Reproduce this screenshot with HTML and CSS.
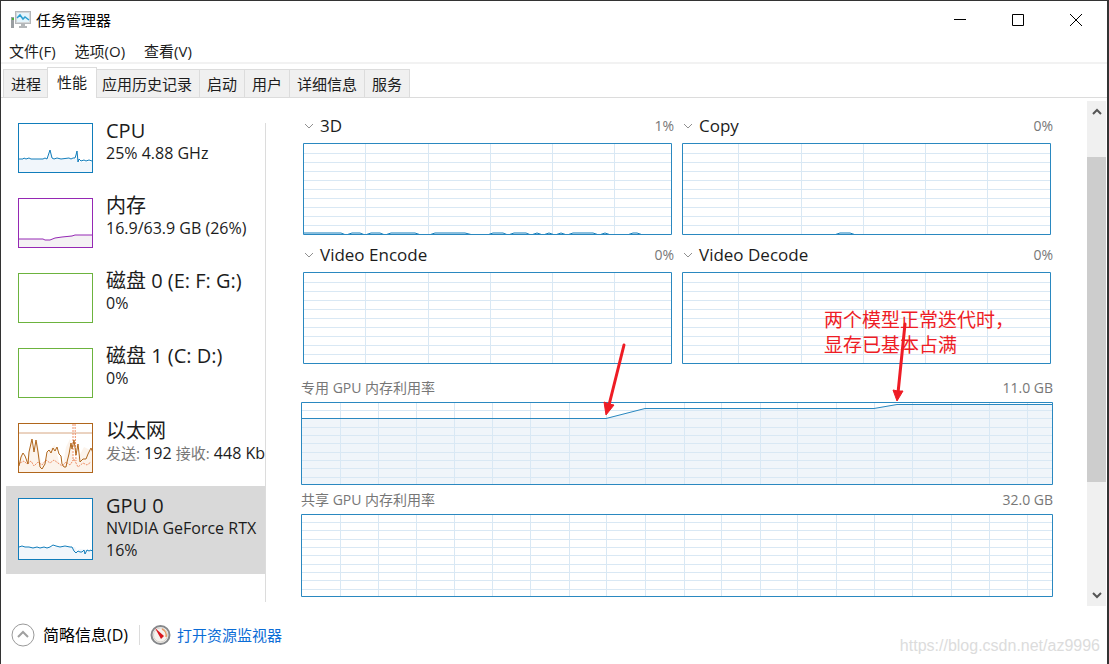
FILE: index.html
```html
<!DOCTYPE html>
<html lang="zh-CN">
<head>
<meta charset="utf-8">
<title>任务管理器</title>
<link rel="stylesheet" href="styles.css">
</head>
<body>
<div class="window">
  <header class="titlebar">
    <svg class="app-icon" width="20" height="18" viewBox="0 0 20 18">
      <rect x="0" y="6" width="3" height="11" fill="#9a9fa2"/>
      <rect x="1" y="7" width="2" height="2" fill="#4caf3a"/>
      <rect x="4.500" y="0.500" width="15" height="12" fill="#d4d7d9" stroke="#b4b8bb"/>
      <rect x="6" y="2" width="12" height="9" fill="#e4f5fc"/>
      <path d="M6 7L9 4l3 4 2-2 4 3" fill="none" stroke="#2d9fd0" stroke-width="1.500"/>
      <path d="M10 13h4v2h2v2H8v-2h2z" fill="#b4b7b9"/>
    </svg>
    <h1 class="app-title">任务管理器</h1>
    <div class="window-buttons">
      <button class="window-button" aria-label="最小化"><svg width="12" height="12" viewBox="0 0 12 12"><path d="M0 5.500h12"/></svg></button>
      <button class="window-button" aria-label="最大化"><svg width="12" height="12" viewBox="0 0 12 12"><path d="M.5 .5h11v11H.5z"/></svg></button>
      <button class="window-button" aria-label="关闭"><svg width="12" height="12" viewBox="0 0 12 12"><path d="M0 0l12 12M12 0L0 12"/></svg></button>
    </div>
  </header>
  <nav class="menu">
    <button class="menu-item">文件(F)</button>
    <button class="menu-item">选项(O)</button>
    <button class="menu-item">查看(V)</button>
  </nav>
  <div class="tabs" role="tablist">
    <button class="tab" role="tab">进程</button>
    <button class="tab tab-active" role="tab" aria-selected="true">性能</button>
    <button class="tab" role="tab">应用历史记录</button>
    <button class="tab" role="tab">启动</button>
    <button class="tab" role="tab">用户</button>
    <button class="tab" role="tab">详细信息</button>
    <button class="tab" role="tab">服务</button>
  </div>
  <div class="content">
    <aside class="sidebar">
      <button class="device">
        <svg class="thumb thumb-blue" viewBox="0 0 75 50">
          <path class="area" d="M0 36H30L32 28 35 36H58L60 29 61 39 75 39V50H0z"/>
          <path class="line" d="M1 36h4l1-1 2 1 3-1 2 1h12l2-1 2 1 1-3 2-6 2 8 2 1 3-1 4 1 8-1 2 1 2-1 2 0 1-3 1-4 1 11 1-3 2 2 3-1 2 1 3-1 3 1h3"/>
          <rect class="frame" x=".5" y=".5" width="74" height="49"/>
        </svg>
        <span class="device-text"><span class="device-name">CPU</span><span class="device-info">25% 4.88 GHz</span></span>
      </button>
      <button class="device">
        <svg class="thumb thumb-purple" viewBox="0 0 75 50">
          <path class="area" d="M0 41H25l2 1h5l5-2 8-1 10-2H75V50H0z"/>
          <path class="line" d="M0 41H25l2 1h5l5-2 7-1 10-1 3-1H75"/>
          <rect class="frame" x=".5" y=".5" width="74" height="49"/>
        </svg>
        <span class="device-text"><span class="device-name">内存</span><span class="device-info">16.9/63.9 GB (26%)</span></span>
      </button>
      <button class="device">
        <svg class="thumb thumb-green" viewBox="0 0 75 50"><rect class="frame" x=".5" y=".5" width="74" height="49"/></svg>
        <span class="device-text"><span class="device-name">磁盘 0 (E: F: G:)</span><span class="device-info">0%</span></span>
      </button>
      <button class="device">
        <svg class="thumb thumb-green" viewBox="0 0 75 50"><rect class="frame" x=".5" y=".5" width="74" height="49"/></svg>
        <span class="device-text"><span class="device-name">磁盘 1 (C: D:)</span><span class="device-info">0%</span></span>
      </button>
      <button class="device">
        <svg class="thumb thumb-orange" viewBox="0 0 75 50">
          <path class="area" d="M1 43l3-13 3 9 3-5 3-19 3 14 3-12 4 22 4 1 4-13 6-5 4 17 4 3 3-18 4-8 4 20 4-1 6-11 8 4V50H1z"/>
          <path class="limit" d="M1 10H74"/>
          <path class="received" d="M55 1V38M57 1l1 37M2 40l4-2 3 3 4-3 3 5 4-4 4 3 4-5 4 3 4-3 4 3 4 3 4-4 4 3 4-6 4 8 5-4 4 2 4-3"/>
          <path class="line" d="M1 43l2-9 2-4 2 3 3 8 1-12 3-13 2 13 2-12 2 12 2 15 2 2 3-5 2-12 2-2 2 3 2-5 2 3 2-4 2 7 2 2 1 8 2 3 2 0 1-5 2-8 2-11 1 6 2-9 2 15 2-11 2 18 3-3 3 0 2-5 3-6 2 5 3-3 1-2"/>
          <rect class="frame" x=".5" y=".5" width="74" height="49"/>
        </svg>
        <span class="device-text"><span class="device-name">以太网</span><span class="device-info"><span class="rate-label">发送:</span> 192 <span class="rate-label">接收:</span> 448 Kb</span></span>
      </button>
      <button class="device device-active">
        <svg class="thumb thumb-tall thumb-blue" viewBox="0 0 75 62">
          <path class="area" d="M0 49H57l2 4 3-2 13 1V62H0z"/>
          <path class="line" d="M1 49l3-1 3 1 4 0 4 1 4-1 3 1 4-1 3 1 3-1 3-2 3 1 4 1 5-1 5 1h2l2 4 2 2 2-2 2 1 2 0 2-2 1 4 2-4 2 1 2-1 1 1"/>
          <rect class="frame" x=".5" y=".5" width="74" height="61"/>
        </svg>
        <span class="device-text"><span class="device-name">GPU 0</span><span class="device-info">NVIDIA GeForce RTX</span><span class="device-info">16%</span></span>
      </button>
    </aside>
    <main class="details">
      <section class="engines">
        <div class="engine">
          <div class="engine-head">
            <button class="engine-name"><svg class="chevron" viewBox="0 0 10 6"><path d="M1 1l4 4 4-4"/></svg>3D</button>
            <span class="value">1%</span>
          </div>
          <svg class="plot plot-engine" viewBox="0 0 369 92" preserveAspectRatio="none">
            <path class="grid" d="M0 10.500H368M0 19.500H368M0 28.500H368M0 37.500H368M0 46.500H368M0 55.500H368M0 64.500H368M0 73.500H368M0 82.500H368M62.500 0V91M125.500 0V91M187.500 0V91M249.500 0V91M311.500 0V91"/>
            <path class="activity" d="M1 90H38l5 2 6-2h8l5 2 6-2h9l5 2 6-2h24l6 2 8 0 6-2h30l8 2 14 0 6-2h10l5 2 6-2h12l5 2 6-2 6 2 6-2 6 2 6-2 6 2 6-2h20l6 2 6-2 6 2 16 0 6-2h4l6 2"/>
            <rect class="border" x=".5" y=".5" width="368" height="91"/>
          </svg>
        </div>
        <div class="engine">
          <div class="engine-head">
            <button class="engine-name"><svg class="chevron" viewBox="0 0 10 6"><path d="M1 1l4 4 4-4"/></svg>Copy</button>
            <span class="value">0%</span>
          </div>
          <svg class="plot plot-engine" viewBox="0 0 369 92" preserveAspectRatio="none">
            <path class="grid" d="M0 10.500H368M0 19.500H368M0 28.500H368M0 37.500H368M0 46.500H368M0 55.500H368M0 64.500H368M0 73.500H368M0 82.500H368M56.500 0V91M119.500 0V91M181.500 0V91M243.500 0V91M305.500 0V91"/>
            <path class="activity" d="M152 92l6-2h10l6 2"/>
            <rect class="border" x=".5" y=".5" width="368" height="91"/>
          </svg>
        </div>
        <div class="engine">
          <div class="engine-head">
            <button class="engine-name"><svg class="chevron" viewBox="0 0 10 6"><path d="M1 1l4 4 4-4"/></svg>Video Encode</button>
            <span class="value">0%</span>
          </div>
          <svg class="plot plot-engine" viewBox="0 0 369 92" preserveAspectRatio="none">
            <path class="grid" d="M0 10.500H368M0 19.500H368M0 28.500H368M0 37.500H368M0 46.500H368M0 55.500H368M0 64.500H368M0 73.500H368M0 82.500H368M62.500 0V91M125.500 0V91M187.500 0V91M249.500 0V91M311.500 0V91"/>
            <rect class="border" x=".5" y=".5" width="368" height="91"/>
          </svg>
        </div>
        <div class="engine">
          <div class="engine-head">
            <button class="engine-name"><svg class="chevron" viewBox="0 0 10 6"><path d="M1 1l4 4 4-4"/></svg>Video Decode</button>
            <span class="value">0%</span>
          </div>
          <svg class="plot plot-engine" viewBox="0 0 369 92" preserveAspectRatio="none">
            <path class="grid" d="M0 10.500H368M0 19.500H368M0 28.500H368M0 37.500H368M0 46.500H368M0 55.500H368M0 64.500H368M0 73.500H368M0 82.500H368M56.500 0V91M119.500 0V91M181.500 0V91M243.500 0V91M305.500 0V91"/>
            <rect class="border" x=".5" y=".5" width="368" height="91"/>
          </svg>
        </div>
      </section>
      <section class="memory">
        <div class="memory-head"><span>专用 GPU 内存利用率</span><span>11.0 GB</span></div>
        <svg class="plot plot-memory" viewBox="0 0 752 83" preserveAspectRatio="none">
          <path class="usage-area" d="M0 16H305L344 6H573L596 2H752V83H0z"/>
          <path class="grid" d="M0 8.500H752M0 16.500H752M0 25.500H752M0 33.500H752M0 41.500H752M0 50.500H752M0 58.500H752M0 66.500H752M0 75.500H752M39.500 0V83M77.500 0V83M115.500 0V83M153.500 0V83M191.500 0V83M229.500 0V83M268.500 0V83M305.500 0V83M344.500 0V83M383.500 0V83M420.500 0V83M459.500 0V83M496.500 0V83M535.500 0V83M573.500 0V83M611.500 0V83M650.500 0V83M688.500 0V83M726.500 0V83"/>
          <path class="usage" d="M0 16.500H305L344 6.500H573L596 2.500H752"/>
          <rect class="border" x=".5" y=".5" width="751" height="82"/>
        </svg>
      </section>
      <section class="memory">
        <div class="memory-head"><span>共享 GPU 内存利用率</span><span>32.0 GB</span></div>
        <svg class="plot plot-memory" viewBox="0 0 752 83" preserveAspectRatio="none">
          <path class="grid" d="M0 8.500H752M0 16.500H752M0 25.500H752M0 33.500H752M0 41.500H752M0 50.500H752M0 58.500H752M0 66.500H752M0 75.500H752M39.500 0V83M77.500 0V83M115.500 0V83M153.500 0V83M191.500 0V83M229.500 0V83M268.500 0V83M305.500 0V83M344.500 0V83M383.500 0V83M420.500 0V83M459.500 0V83M496.500 0V83M535.500 0V83M573.500 0V83M611.500 0V83M650.500 0V83M688.500 0V83M726.500 0V83"/>
          <rect class="border" x=".5" y=".5" width="751" height="82"/>
        </svg>
      </section>
      <svg class="arrow arrow-first" width="26" height="74" viewBox="0 0 26 74">
        <path class="arrow-shaft" d="M22 3L7 63"/><path class="arrow-head" d="M4 73L2 60l5 2 5 1z"/>
      </svg>
      <svg class="arrow arrow-second" width="20" height="82" viewBox="0 0 20 82">
        <path class="arrow-shaft" d="M14 3L7 72"/><path class="arrow-head" d="M6 80L2 69l5 1 5 0z"/>
      </svg>
      <p class="note">两个模型正常迭代时，<br>显存已基本占满</p>
    </main>
    <div class="scrollbar">
      <button class="scroll-button" aria-label="向上滚动"><svg width="10" height="8" viewBox="0 0 10 8"><path d="M1 6l4-4 4 4"/></svg></button>
      <div class="scroll-track"><div class="scroll-thumb"></div></div>
      <button class="scroll-button" aria-label="向下滚动"><svg width="10" height="8" viewBox="0 0 10 8"><path d="M1 2l4 4 4-4"/></svg></button>
    </div>
  </div>
  <footer class="footer">
    <button class="fewer">
      <svg width="24" height="24" viewBox="0 0 24 24"><circle cx="12" cy="12" r="11" fill="#fff" stroke="#9a9a9a"/><path d="M7 14l5-5 5 5" fill="none" stroke="#a0a0a0" stroke-width="2"/></svg>
      简略信息(D)
    </button>
    <a class="monitor" href="#">
      <svg width="21" height="20" viewBox="0 0 21 20">
        <circle cx="10.500" cy="10" r="9" fill="#f5f2ee" stroke="#85878a" stroke-width="2"/>
        <circle cx="10.500" cy="10" r="7" fill="none" stroke="#d5d1cc"/>
        <path d="M12 4a7 7 0 0 1 4 8" fill="none" stroke="#e79a63" stroke-width="1.500"/>
        <path d="M5 3l9 8-3 3z" fill="#d9141c"/>
      </svg>
      <span>打开资源监视器</span>
    </a>
    <span class="watermark">https://blog.csdn.net/az9996</span>
  </footer>
</div>
</body>
</html>
```
FILE: styles.css
```css
* {
  box-sizing: border-box;
}

body {
  margin: 0;
  background: #fff;
  color: #1c1c1c;
  font: 15px/20px "Open Sans", "Noto Sans CJK SC", sans-serif;
}

button {
  margin: 0;
  padding: 0;
  border: 0;
  background: none;
  color: inherit;
  font: inherit;
  text-align: left;
}

svg {
  display: block;
  flex: none;
}

.window {
  display: flex;
  flex-direction: column;
  min-height: 100vh;
  border: solid #333;
  border-width: 1px 2px 0 1px;
}

.titlebar {
  display: flex;
  align-items: center;
  height: 38px;
  padding: 0 2px 0 10px;
  gap: 5px;
}

.app-title {
  margin: 0;
  color: #000;
  font-size: 15px;
  font-weight: 400;
}

.window-buttons {
  display: flex;
  margin-left: auto;
}

.window-button {
  display: flex;
  align-items: center;
  justify-content: center;
  width: 58px;
  height: 38px;
}

.window-button path {
  fill: none;
  stroke: #000;
}

.menu {
  display: flex;
  gap: 19px;
  height: 25px;
  padding: 2px 8px;
  border-bottom: 2px solid #f2f2f2;
}

.tabs {
  display: flex;
  align-items: flex-end;
  height: 34px;
  padding-left: 2px;
  border-bottom: 1px solid #dcdcdc;
}

.tab {
  height: 28px;
  padding: 0 7px;
  border: 1px solid #dcdcdc;
  border-width: 1px 1px 0 0;
  background: #f0f0f0;
}

.tab:first-child {
  border-left-width: 1px;
}

.tab-active {
  z-index: 1;
  height: 31px;
  margin: 0 -2px -1px;
  padding: 0 9px 3px;
  border-left-width: 1px;
  background: #fff;
}

.content {
  display: flex;
}

.sidebar {
  position: relative;
  flex: none;
  width: 260px;
  margin-left: 5px;
  padding: 13px 0 32px;
  overflow: hidden;
}

.sidebar::after {
  position: absolute;
  top: 25px;
  right: 0;
  bottom: 4px;
  width: 1px;
  background: #dcdcdc;
  content: "";
}

.device {
  display: flex;
  align-items: flex-start;
  gap: 13px;
  width: 100%;
  height: 75px;
  padding: 12px 0 0 12px;
}

.device-active {
  height: 88px;
  background: #d9d9d9;
}

.thumb {
  width: 75px;
  height: 50px;
  background: #fff;
}

.thumb-tall {
  height: 62px;
}

.thumb path,
.thumb .frame {
  fill: none;
  stroke: currentColor;
}

.thumb .area {
  fill: #f1f6fb;
  stroke: none;
}

.thumb-blue {
  color: #117dbb;
}

.thumb-purple {
  color: #9528b4;
}

.thumb-purple .area {
  fill: #f4f2f4;
}

.thumb-green {
  color: #6cb33e;
}

.thumb-orange {
  color: #b0661c;
}

.thumb-orange .area {
  fill: #fcf3eb;
}

.thumb-orange .limit {
  stroke: #d6a682;
}

.thumb-orange .received {
  stroke: #ee9068;
  stroke-dasharray: 2 1;
}

.device-text {
  display: flex;
  flex-direction: column;
  margin-top: -3px;
  white-space: nowrap;
}

.device-name {
  font-size: 20px;
  line-height: 22px;
}

.device-info {
  font-size: 16px;
  line-height: 22px;
}

.rate-label {
  color: #777;
  font-size: 15px;
}

.details {
  position: relative;
  flex: 1;
  margin: 16px 34px 0 35px;
}

.engines {
  display: grid;
  grid-template-columns: 1fr 1fr;
  gap: 8px 10px;
  padding: 0 2px;
}

.engine-head {
  display: flex;
  align-items: center;
  justify-content: space-between;
  height: 24px;
  margin: 0 -2px 5px 0;
}

.engine-name {
  display: flex;
  align-items: center;
  gap: 6px;
  font-size: 17px;
}

.chevron {
  width: 10px;
  height: 6px;
  margin-left: 1px;
}

.chevron path {
  fill: none;
  stroke: #909090;
}

.value {
  color: #777;
  font-size: 14px;
}

.plot {
  width: 100%;
}

.plot path,
.plot rect {
  fill: none;
  vector-effect: non-scaling-stroke;
}

.plot-engine {
  height: 92px;
}

.plot-memory {
  height: 83px;
}

.plot .border {
  stroke: #2a88c0;
}

.plot .grid {
  stroke: #d9e8f4;
}

.plot .activity {
  stroke: #117dbb;
}

.plot .usage {
  stroke: #2a88c0;
}

.plot .usage-area {
  fill: #f0f5fa;
}

.memory {
  margin-top: 5px;
}

.engines + .memory {
  margin-top: 14px;
}

.memory-head {
  display: flex;
  justify-content: space-between;
  height: 20px;
  margin-bottom: 4px;
  color: #777;
  font-size: 14px;
}

.arrow {
  position: absolute;
}

.arrow-first {
  top: 228px;
  left: 301px;
}

.arrow-second {
  top: 207px;
  left: 590px;
}

.arrow-shaft {
  fill: none;
  stroke: #ee1c25;
  stroke-width: 3px;
  stroke-linecap: round;
}

.arrow-head {
  fill: #ee1c25;
  stroke: #ee1c25;
}

.note {
  position: absolute;
  top: 194px;
  left: 523px;
  margin: 0;
  color: #ee1c25;
  font-size: 19px;
  line-height: 25px;
  white-space: nowrap;
}

.scrollbar {
  display: flex;
  flex: none;
  flex-direction: column;
  width: 19px;
  margin: 3px 1px 0 0;
  background: #f0f0f0;
}

.scroll-button {
  display: flex;
  align-items: center;
  justify-content: center;
  height: 22px;
}

.scroll-button path {
  fill: none;
  stroke: #555;
  stroke-width: 2px;
}

.scroll-track {
  display: flex;
  flex: 1;
  flex-direction: column;
  padding: 34px 0 102px;
}

.scroll-thumb {
  flex: 1;
  background: #cdcdcd;
}

.footer {
  display: flex;
  flex: 1;
  align-items: center;
  min-height: 58px;
  padding: 0 7px 0 10px;
}

.fewer {
  display: flex;
  align-items: center;
  gap: 8px;
  padding-right: 11px;
  color: #000;
  font-size: 16px;
}

.monitor {
  display: flex;
  align-items: center;
  gap: 6px;
  padding-left: 10px;
  border-left: 1px solid #dcdcdc;
  color: #0a6cd6;
  text-decoration: none;
}

.watermark {
  align-self: flex-end;
  margin-bottom: 8px;
  margin-left: auto;
  color: #dcdcdc;
  font: 16px/20px "Liberation Sans", sans-serif;
}
```
